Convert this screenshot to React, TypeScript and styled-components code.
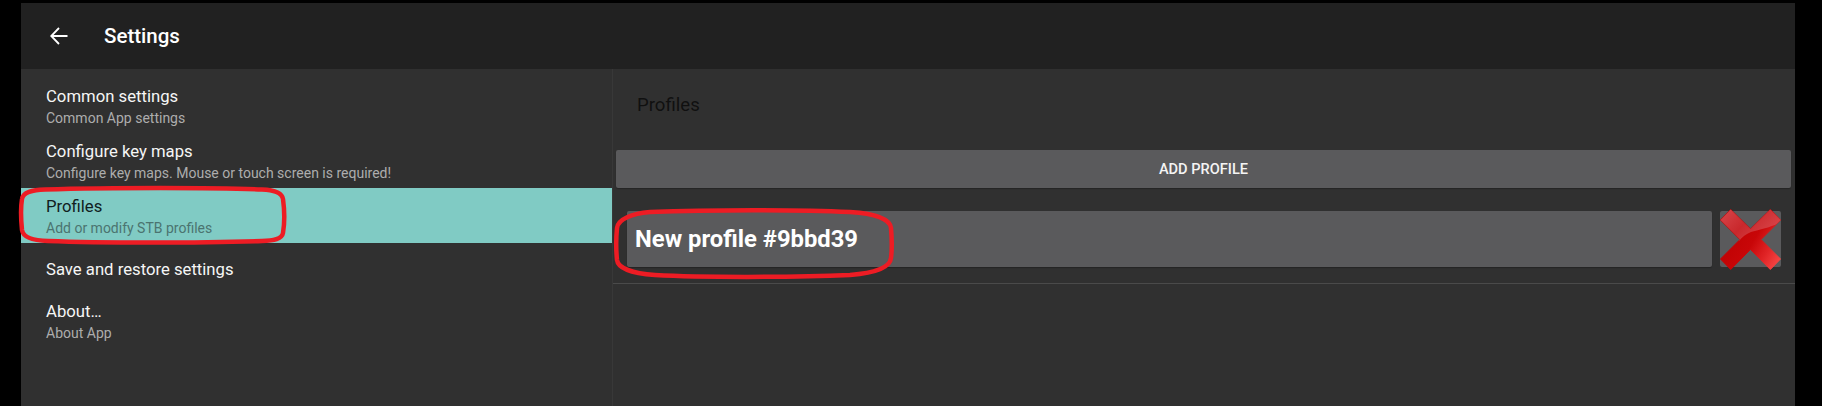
import * as React from 'react';
import styled, { createGlobalStyle } from 'styled-components';

const GlobalStyle = createGlobalStyle`
  html, body {
    margin: 0;
    height: 100%;
    background: #000;
    overflow: hidden;
  }
  body {
    font-family: Roboto, "Liberation Sans", sans-serif;
  }
`;

const Screen = styled.div`
  position: relative;
  width: 1822px;
  height: 406px;
  box-sizing: border-box;
  padding: 3px 27px 0 21px;
  display: flex;
  flex-direction: column;
`;

const Toolbar = styled.header`
  height: 66px;
  flex: none;
  background: #212121;
  display: flex;
  align-items: center;
  color: #fff;
`;

const BackButton = styled.div`
  width: 83px;
  flex: none;
  display: flex;
  padding-left: 29px;
  box-sizing: border-box;

  svg {
    display: block;
  }
`;

const Title = styled.h1`
  margin: 0;
  font-size: 20.5px;
  font-weight: 500;
`;

const Body = styled.div`
  flex: 1;
  display: flex;
  background: #303030;
  min-height: 0;
`;

const Sidebar = styled.nav`
  width: 591px;
  flex: none;
  padding-top: 9px;
  border-right: 1px solid #383838;
`;

const Item = styled.div<{ $active?: boolean; $single?: boolean }>`
  height: ${p => (p.$single ? 50 : 55)}px;
  box-sizing: border-box;
  padding: 3px 0 0 25px;
  display: flex;
  flex-direction: column;
  justify-content: center;
  background: ${p => (p.$active ? '#80cbc4' : 'transparent')};
`;

const ItemTitle = styled.div<{ $active?: boolean }>`
  font-size: 16.7px;
  line-height: 22px;
  color: ${p => (p.$active ? '#10201e' : '#f6f6f6')};
`;

const ItemSummary = styled.div<{ $active?: boolean }>`
  font-size: 14px;
  line-height: 21px;
  color: ${p => (p.$active ? '#4b7470' : '#adadad')};
`;

const Content = styled.main`
  flex: 1;
  min-width: 0;
  display: flex;
  flex-direction: column;
`;

const SectionTitle = styled.h2`
  margin: 0;
  height: 81px;
  box-sizing: border-box;
  padding: 26px 0 0 24px;
  font-size: 18.6px;
  line-height: 21px;
  font-weight: 400;
  color: #101010;
`;

const AddButton = styled.button`
  display: block;
  height: 38px;
  margin: 0 4px 0 3px;
  padding: 0;
  border: 0;
  border-radius: 2px;
  background: #5a5a5c;
  color: #f4f4f4;
  font-family: inherit;
  font-size: 14.6px;
  font-weight: 500;
  box-shadow: 0 1px 1px rgba(0, 0, 0, 0.25);
`;

const ProfileRow = styled.div`
  display: flex;
  gap: 8px;
  margin-top: 23px;
  padding: 0 14px 16px 14px;
  border-bottom: 1px solid #4a4a4a;
`;

const ProfileName = styled.div`
  flex: 1;
  height: 56px;
  box-sizing: border-box;
  padding-left: 8px;
  display: flex;
  align-items: center;
  border-radius: 2px;
  background: #5a5a5c;
  color: #fff;
  font-size: 23.8px;
  font-weight: 700;
  box-shadow: 0 1px 1px rgba(0, 0, 0, 0.25);
`;

const DeleteButton = styled.div`
  width: 61px;
  height: 56px;
  flex: none;
  display: flex;
  align-items: center;
  justify-content: center;
  border-radius: 2px;
  background: #5a5a5c;

  svg {
    flex: none;
    display: block;
  }
`;

const Annotation = styled.svg`
  position: absolute;
  left: 0;
  top: 0;
  pointer-events: none;
`;

const ArrowBack = () => (
  <svg width="18" height="18" viewBox="0 0 18 18" fill="none" stroke="#fff" strokeWidth="1.8">
    <path d="M17.5 9H1.5M9 1L1.2 9L9 17" />
  </svg>
);

const CROSS =
  'M10.7 0.5 L30.5 20 L50.3 0.5 L60.5 11 L41 30.5 L60.5 50 L50.3 60.5 L30.5 40.5 L10.7 60.5 L0.5 50 L20 30.5 L0.5 11 Z';

const RedCross = () => (
  <svg width="61" height="61" viewBox="0 0 61 61">
    <defs>
      <linearGradient id="crossBase" x1="0" y1="0.3" x2="1" y2="0.9">
        <stop offset="0" stopColor="#bc0000" />
        <stop offset="0.5" stopColor="#c80608" />
        <stop offset="0.75" stopColor="#e02426" />
        <stop offset="1" stopColor="#fa4a48" />
      </linearGradient>
      <linearGradient id="crossGloss" x1="0" y1="0" x2="1" y2="0.5">
        <stop offset="0" stopColor="#d8484c" />
        <stop offset="0.5" stopColor="#c9282c" />
        <stop offset="1" stopColor="#d84448" />
      </linearGradient>
      <clipPath id="crossClip">
        <path d={CROSS} />
      </clipPath>
    </defs>
    <path d={CROSS} fill="url(#crossBase)" stroke="url(#crossBase)" strokeWidth="1" strokeLinejoin="round" />
    <g clipPath="url(#crossClip)">
      <path d="M0 0H61V13 C50 19 38 21 31 23 C26 25 22 28 19 32 L0 32 Z" fill="url(#crossGloss)" />
    </g>
  </svg>
);

const items = [
  { title: 'Common settings', summary: 'Common App settings' },
  { title: 'Configure key maps', summary: 'Configure key maps. Mouse or touch screen is required!' },
  { title: 'Profiles', summary: 'Add or modify STB profiles', active: true },
  { title: 'Save and restore settings', single: true },
  { title: 'About…', summary: 'About App' },
];

const App = () => (
  <Screen>
    <GlobalStyle />
    <Toolbar>
      <BackButton>
        <ArrowBack />
      </BackButton>
      <Title>Settings</Title>
    </Toolbar>
    <Body>
      <Sidebar>
        {items.map(item => (
          <Item key={item.title} $active={item.active} $single={item.single}>
            <ItemTitle $active={item.active}>{item.title}</ItemTitle>
            {item.summary && <ItemSummary $active={item.active}>{item.summary}</ItemSummary>}
          </Item>
        ))}
      </Sidebar>
      <Content>
        <SectionTitle>Profiles</SectionTitle>
        <AddButton>ADD PROFILE</AddButton>
        <ProfileRow>
          <ProfileName>New profile #9bbd39</ProfileName>
          <DeleteButton>
            <RedCross />
          </DeleteButton>
        </ProfileRow>
      </Content>
    </Body>
    <Annotation width="1822" height="406" fill="none" stroke="#ed1c24" strokeWidth="4.5">
      <path d="M45 189.5 C110 187.5 215 187.5 262 189.5 C275 190 282 193 283 199 C284.5 210 284.5 224 283 233 C282 239 274 240.5 262 241 C200 243 100 243 48 241 C32 240.5 23 237 22 230 C21 220 21 205 22 199 C23 192 32 190 45 189.5 Z" />
      <path d="M650 212 C710 209.5 800 209.5 850 212 C875 213.5 890 219 891 228 C892 240 892 250 891 258 C890 268 875 273 850 275 C790 277.5 700 277.5 655 275 C632 273.5 618 268 617 260 C616 250 616 238 617 228 C618 219 632 213.5 650 212 Z" />
    </Annotation>
  </Screen>
);

export default App;
